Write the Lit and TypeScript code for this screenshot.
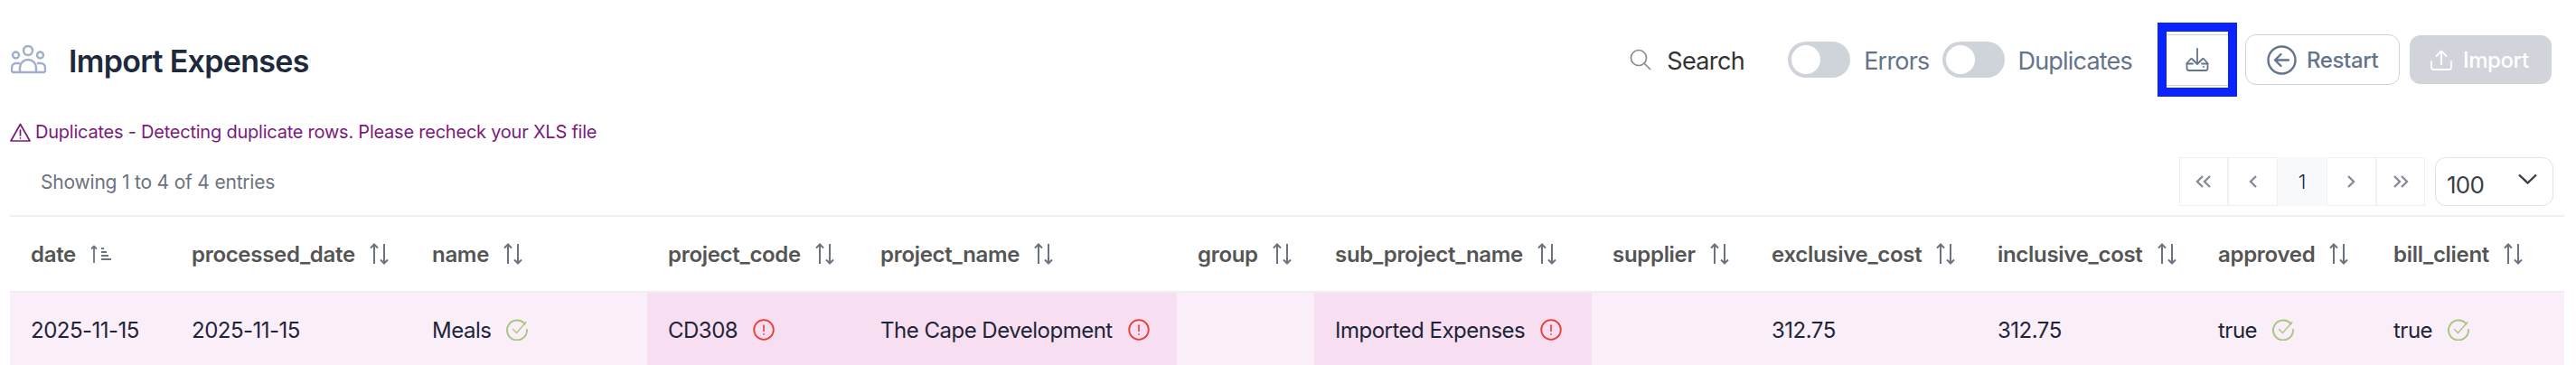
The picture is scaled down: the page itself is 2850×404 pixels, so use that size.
import { LitElement, html, css, svg } from 'lit';
import { customElement } from 'lit/decorators.js';

type Cell = { text: string; mark?: 'ok' | 'err' };

const COLUMNS = [
  { name: 'date', width: 178 },
  { name: 'processed_date', width: 266 },
  { name: 'name', width: 261 },
  { name: 'project_code', width: 235 },
  { name: 'project_name', width: 351 },
  { name: 'group', width: 152 },
  { name: 'sub_project_name', width: 307 },
  { name: 'supplier', width: 176 },
  { name: 'exclusive_cost', width: 250 },
  { name: 'inclusive_cost', width: 244 },
  { name: 'approved', width: 194 },
  { name: 'bill_client', width: 212 },
];

const ROW: Cell[] = [
  { text: '2025-11-15' },
  { text: '2025-11-15' },
  { text: 'Meals', mark: 'ok' },
  { text: 'CD308', mark: 'err' },
  { text: 'The Cape Development', mark: 'err' },
  { text: '' },
  { text: 'Imported Expenses', mark: 'err' },
  { text: '' },
  { text: '312.75' },
  { text: '312.75' },
  { text: 'true', mark: 'ok' },
  { text: 'true', mark: 'ok' },
];

const sortIcon = html`<svg class="sort" width="22" height="24" viewBox="0 0 22 24" fill="none" stroke="#6b7280" stroke-width="2">
  <path d="M5 23V1.5M1 5.5l4-4 4 4" />
  <path d="M16 1v21.5M12 18.5l4 4 4-4" />
</svg>`;

const sortAscIcon = html`<svg class="sort" width="24" height="20" viewBox="0 0 24 20" fill="none" stroke="#6b7280" stroke-width="1.8">
  <path d="M4 20V1.5M1 4.5l3-3 3 3" />
  <path d="M12 4h3M12 8h6M12 12h8M12 16h11" />
</svg>`;

const okIcon = html`<svg class="mark" width="24" height="24" viewBox="0 0 24 24" fill="none" stroke="#a6c67e" stroke-width="1.9" stroke-linecap="round">
  <path d="M20.6 5.6A11 11 0 1 0 23 12" />
  <path d="M7.5 11.5l4 4L22 3.5" stroke-width="1.3" />
</svg>`;

const errIcon = html`<svg class="mark" width="24" height="24" viewBox="0 0 24 24" fill="none" stroke="#ee3a32" stroke-width="1.8" stroke-linecap="round">
  <circle cx="12" cy="12" r="10.8" />
  <path d="M12 7v6.5M12 16.8v.4" stroke-width="1.6" />
</svg>`;

const chevrons = (d: string) => svg`<path d=${d} />`;

@customElement('app-root')
export class AppRoot extends LitElement {
  static override styles = css`
    :host {
      display: block;
      height: 404px;
      overflow: hidden;
      background: #fff;
      font-family: Inter, 'Liberation Sans', sans-serif;
      color: #1e2539;
    }

    .page {
      padding: 0 13px 0 11px;
    }

    .top {
      display: flex;
      align-items: center;
      height: 82px;
      padding: 25px 14px 0 1px;
    }

    .title {
      margin: 2px 0 0 25px;
      font-size: 34px;
      font-weight: 600;
      letter-spacing: -0.7px;
      color: #1e293b;
    }

    .tools {
      margin-left: auto;
      display: flex;
      align-items: center;
    }

    .search {
      display: flex;
      align-items: center;
      gap: 17px;
      margin-right: 48px;
      font-size: 27px;
      letter-spacing: -0.6px;
      color: #333;
    }

    .search span,
    .toggle-label {
      padding-top: 2px;
    }

    .toggle {
      width: 69px;
      height: 40px;
      border-radius: 20px;
      background: #cfd4da;
      padding: 4px;
      box-sizing: border-box;
    }

    .toggle i {
      display: block;
      width: 32px;
      height: 32px;
      border-radius: 50%;
      background: #fff;
    }

    .toggle-label {
      margin: 0 14px 0 15px;
      font-size: 27px;
      letter-spacing: -0.8px;
      color: #64748b;
    }

    .highlight {
      box-sizing: border-box;
      width: 88px;
      height: 82px;
      margin-left: 14px;
      border: 10px solid #0a24ff;
      display: flex;
      align-items: center;
    }

    .export {
      display: flex;
      align-items: center;
      justify-content: center;
      width: 100%;
      height: 57px;
      border-top: 1px solid #cbd5e1;
      border-bottom: 1px solid #cbd5e1;
      box-sizing: border-box;
    }

    .btn {
      display: flex;
      align-items: center;
      box-sizing: border-box;
      height: 56px;
      border-radius: 12px;
      font-size: 24px;
      font-weight: 500;
      letter-spacing: -0.4px;
    }

    .restart {
      width: 171px;
      margin-left: 9px;
      padding-left: 23px;
      gap: 11px;
      border: 1px solid #cbd5e1;
      color: #64748b;
    }

    .import {
      width: 157px;
      height: 54px;
      margin-left: 11px;
      padding-left: 23px;
      gap: 12px;
      background: #d1d5db;
      color: #fff;
    }

    .warning {
      display: flex;
      align-items: center;
      gap: 5px;
      height: 30px;
      margin-top: 24px;
      font-size: 20px;
      letter-spacing: -0.23px;
      color: #7b1a7b;
    }

    .bar {
      display: flex;
      align-items: center;
      justify-content: space-between;
      height: 54px;
      margin-top: 13px;
      padding: 0 12px 0 34px;
    }

    .info {
      font-size: 21px;
      letter-spacing: -0.2px;
      color: #6b7280;
    }

    .pager {
      display: flex;
      align-items: stretch;
      gap: 11px;
    }

    .pages {
      display: flex;
    }

    .pages span {
      display: flex;
      align-items: center;
      justify-content: center;
      box-sizing: border-box;
      width: 54.4px;
      height: 54px;
      border: 1px solid #eff0f2;
      font-size: 22px;
      font-weight: 300;
      color: #1e293b;
    }

    .pages span.on {
      background: #f8f9fb;
      border-color: #f8f9fb;
    }

    .size {
      display: flex;
      align-items: center;
      justify-content: space-between;
      box-sizing: border-box;
      width: 131px;
      height: 54px;
      padding: 6px 17px 0 12px;
      border: 1px solid #dfe2e6;
      border-radius: 12px;
      font-size: 26px;
      letter-spacing: -0.8px;
      color: #3a3f47;
    }

    .size svg {
      margin-top: -12px;
    }

    table {
      width: 2826px;
      margin-top: 10px;
      table-layout: fixed;
      border-collapse: collapse;
      border-top: 2px solid #eceef0;
    }

    th {
      height: 82px;
      padding: 0 0 0 23px;
      text-align: left;
      font-size: 24px;
      font-weight: 600;
      letter-spacing: -0.3px;
      color: #555;
      border-bottom: 2px solid #eceef0;
    }

    td {
      height: 82px;
      padding: 0 0 0 23px;
      font-size: 24px;
      letter-spacing: -0.5px;
      background: #faeef8;
    }

    td.bad {
      background: #f7def0;
    }

    .cell {
      display: flex;
      align-items: center;
      white-space: nowrap;
    }

    .sort {
      flex: none;
      margin-left: 16px;
    }

    .mark {
      flex: none;
      margin-left: 17px;
    }
  `;

  private _pageIcon(d: string) {
    return html`<svg width="20" height="16" viewBox="0 0 20 16" fill="none" stroke="#868c96" stroke-width="2.4">
      ${chevrons(d)}
    </svg>`;
  }

  override render() {
    return html`
      <div class="page">
        <div class="top">
          <svg width="39" height="32" viewBox="0 0 39 32" fill="none" stroke="#9fb0c8" stroke-width="2.4">
            <circle cx="19" cy="6" r="5" />
            <circle cx="5.5" cy="11" r="3.5" />
            <circle cx="32.5" cy="11" r="3.5" />
            <path d="M10 30v-5a9 9 0 0 1 18 0v5" />
            <path d="M1.2 30H37.8M10 20H6a5 5 0 0 0-5 5v5M29 20h4a5 5 0 0 1 5 5v5" />
          </svg>
          <h1 class="title">Import Expenses</h1>
          <div class="tools">
            <div class="search">
              <svg width="24" height="24" viewBox="0 0 24 24" fill="none" stroke="#8a8a8a" stroke-width="1.7">
                <circle cx="10" cy="10" r="8.5" />
                <path d="M16 16l7 7" />
              </svg>
              <span>Search</span>
            </div>
            <div class="toggle"><i></i></div>
            <span class="toggle-label">Errors</span>
            <div class="toggle"><i></i></div>
            <span class="toggle-label">Duplicates</span>
            <div class="highlight">
              <div class="export">
                <svg width="26" height="26" viewBox="0 0 26 26" fill="none" stroke="#64748b" stroke-width="1.8" stroke-linecap="round" stroke-linejoin="round">
                  <path d="M13 1v17M7 12l6 6 6-6" />
                  <path d="M6 12L1.5 17v5.5A2.5 2.5 0 0 0 4 25h18a2.5 2.5 0 0 0 2.5-2.5V17L20 12" />
                  <path d="M1.5 17.5H8M18 17.5h6.5M20 21h.1" />
                </svg>
              </div>
            </div>
            <div class="btn restart">
              <svg width="33" height="33" viewBox="0 0 33 33" fill="none" stroke="#64748b" stroke-width="2.4" stroke-linecap="round" stroke-linejoin="round">
                <circle cx="16.5" cy="16.5" r="15" />
                <path d="M24 16.5H9.5M15.5 10l-6.5 6.5 6.5 6.5" />
              </svg>
              <span>Restart</span>
            </div>
            <div class="btn import">
              <svg width="24" height="23" viewBox="0 0 24 23" fill="none" stroke="#fff" stroke-width="1.8" stroke-linecap="round" stroke-linejoin="round">
                <path d="M12 16V1.5M6.5 7l5.5-5.5L17.5 7" />
                <path d="M1 13v6.5A2.5 2.5 0 0 0 3.5 22h17a2.5 2.5 0 0 0 2.5-2.5V13" />
              </svg>
              <span>Import</span>
            </div>
          </div>
        </div>

        <div class="warning">
          <svg width="23" height="21" viewBox="0 0 23 21" fill="none" stroke="#7b1a7b" stroke-width="1.7" stroke-linejoin="round" stroke-linecap="round">
            <path d="M11.5 1.5L1 20h21z" />
            <path d="M11.5 8v6M11.5 16.8v.2" />
          </svg>
          <span>Duplicates - Detecting duplicate rows. Please recheck your XLS file</span>
        </div>

        <div class="bar">
          <span class="info">Showing 1 to 4 of 4 entries</span>
          <div class="pager">
            <div class="pages">
              <span>${this._pageIcon('M9 2L3 8l6 6M17 2l-6 6 6 6')}</span>
              <span>${this._pageIcon('M13 2L7 8l6 6')}</span>
              <span class="on">1</span>
              <span>${this._pageIcon('M7 2l6 6-6 6')}</span>
              <span>${this._pageIcon('M3 2l6 6-6 6M11 2l6 6-6 6')}</span>
            </div>
            <div class="size">
              <span>100</span>
              <svg width="21" height="12" viewBox="0 0 21 12" fill="none" stroke="#3a3f47" stroke-width="2.4">
                <path d="M1 1.5l9.5 9 9.5-9" />
              </svg>
            </div>
          </div>
        </div>

        <table>
          <colgroup>
            ${COLUMNS.map((c) => html`<col style="width:${c.width}px" />`)}
          </colgroup>
          <thead>
            <tr>
              ${COLUMNS.map(
                (c, i) => html`<th>
                  <div class="cell">${c.name}${i === 0 ? sortAscIcon : sortIcon}</div>
                </th>`,
              )}
            </tr>
          </thead>
          <tbody>
            <tr>
              ${ROW.map(
                (c) => html`<td class=${c.mark === 'err' ? 'bad' : ''}>
                  <div class="cell">
                    ${c.text}${c.mark === 'ok' ? okIcon : c.mark === 'err' ? errIcon : ''}
                  </div>
                </td>`,
              )}
            </tr>
          </tbody>
        </table>
      </div>
    `;
  }
}
